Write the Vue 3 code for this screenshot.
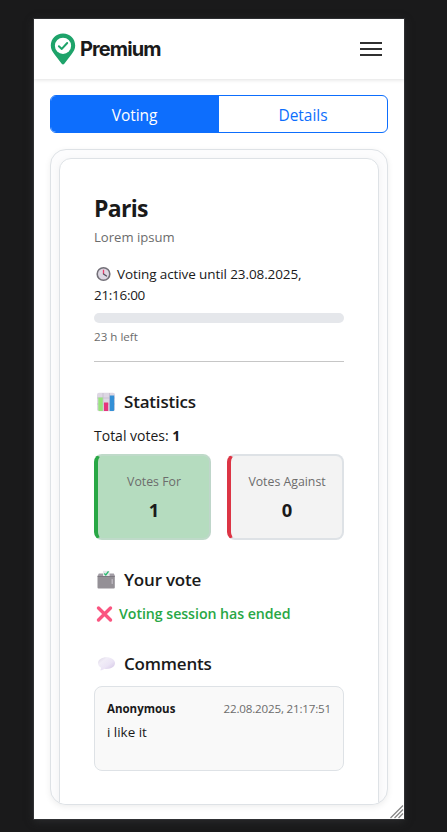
<script setup>
const stats = [
  { label: 'Votes For', value: 1, kind: 'for' },
  { label: 'Votes Against', value: 0, kind: 'against' },
]
const comment = { author: 'Anonymous', date: '22.08.2025, 21:17:51', text: 'i like it' }
</script>

<template>
  <div class="stage">
    <main class="window">
      <header class="header">
        <div class="brand">
          <svg class="pin" width="26" height="32" viewBox="0 0 26 32">
            <path d="M13 .5C6 .5.8 5.8.8 12.6c0 3.4 1.500 6.100 3.800 9l7.100 9.100c.8 1 1.800 1 2.600 0l7.100-9.100c2.300-2.900 3.800-5.600 3.800-9C25.200 5.800 20 .5 13 .5z" fill="#1ea36a" />
            <circle cx="13" cy="12.800" r="8.100" fill="#fff" />
            <path d="M8.900 13.200l2.900 2.700 5.400-5.900" fill="none" stroke="#1ea36a" stroke-width="2" stroke-linecap="round" stroke-linejoin="round" />
          </svg>
          <span class="brand-name">Premium</span>
        </div>
        <div class="burger"><i></i><i></i><i></i></div>
      </header>

      <nav class="tabs">
        <div class="tab active"><span>Voting</span></div>
        <div class="tab"><span>Details</span></div>
      </nav>

      <div class="outer">
        <article class="card">
          <h1 class="title"><span>Paris</span></h1>
          <p class="subtitle"><span>Lorem ipsum</span></p>

          <div class="until">
            <svg width="17" height="16" viewBox="0 0 17 16">
              <circle cx="9.500" cy="8" r="6.300" fill="#ddd8e3" stroke="#737078" stroke-width="1.600" />
              <path d="M9.500 8V3.700" stroke="#e8416d" stroke-width="1.300" />
              <path d="M9.500 8l3 2" stroke="#56515d" stroke-width="1.300" stroke-linecap="round" />
            </svg>
            <span>Voting active until 23.08.2025,</span>
          </div>
          <div class="until"><span class="time">21:16:00</span></div>
          <div class="bar"></div>
          <div class="left"><span>23 h left</span></div>
          <hr />

          <h2>
            <svg width="24" height="20" viewBox="0 0 24 20">
              <rect x="3" y=".8" width="18" height="18.400" rx="2" fill="#ddd7e3" />
              <path d="M9 1v18M15.500 1v18M3 6h18M3 12h18" stroke="#c0b8c8" stroke-width=".7" />
              <path d="M4.300 5.500h4.500V19H5.300a1 1 0 0 1-1-1z" fill="#98e47e" />
              <path d="M10 10.500h4.200V19H10z" fill="#e5357c" />
              <path d="M15.800 3.500h4.400V18a1 1 0 0 1-1 1h-3.400z" fill="#3490d6" />
            </svg>
            <span>Statistics</span>
          </h2>
          <p class="total"><span>Total votes: <b>1</b></span></p>
          <div class="stats">
            <div v-for="s in stats" :key="s.kind" class="stat" :class="s.kind">
              <div class="stat-label"><span>{{ s.label }}</span></div>
              <div class="stat-value">{{ s.value }}</div>
            </div>
          </div>

          <h2>
            <svg width="24" height="20" viewBox="0 0 24 20">
              <path d="M3.500 6l1.300-2.500h15L21 6z" fill="#a29da5" />
              <path d="M9 .8h6.600V6H9z" fill="#e4e8e9" />
              <path d="M10.300 3.500l1.500 1.500L14.500 1.300" fill="none" stroke="#27b96e" stroke-width="1.300" />
              <rect x="3.500" y="6" width="17.300" height="12.500" rx="1" fill="#949096" />
              <path d="M3.500 6.500h17.300" stroke="#7d7880" stroke-width="1" />
              <rect x="17.500" y="9" width="1.500" height="5" rx=".5" fill="#b9b4bc" />
            </svg>
            <span>Your vote</span>
          </h2>
          <p class="ended">
            <svg width="19" height="18" viewBox="0 0 19 18">
              <path d="M4.500 3l12 12M16.500 3l-12 12" stroke="#fa5580" stroke-width="3.400" stroke-linecap="round" />
            </svg>
            <span>Voting session has ended</span>
          </p>

          <h2 class="comments-heading">
            <svg width="24" height="20" viewBox="0 0 24 20">
              <defs>
                <linearGradient id="bubble" x1="0" y1="0" x2="1" y2="1">
                  <stop offset="0" stop-color="#d9d2e4" />
                  <stop offset=".3" stop-color="#f1edf7" />
                  <stop offset=".6" stop-color="#ebe4f5" />
                  <stop offset="1" stop-color="#cfc0e2" />
                </linearGradient>
              </defs>
              <path d="M12.500 3.200c-4.800 0-8.500 2.400-8.500 5.900 0 2 1.200 3.600 3 4.600.2 1-.5 1.800-.8 2.500 1.600.1 3-.5 3.900-1.500.8.200 1.600.3 2.400.3 4.800 0 8.500-2.400 8.500-5.900s-3.700-5.900-8.500-5.900z" fill="url(#bubble)" />
            </svg>
            <span>Comments</span>
          </h2>
          <section class="comment">
            <div class="comment-head">
              <b>{{ comment.author }}</b>
              <span>{{ comment.date }}</span>
            </div>
            <p><span>{{ comment.text }}</span></p>
          </section>
        </article>
      </div>

      <svg class="grip" width="14" height="14" viewBox="0 0 14 14">
        <path d="M.5 13l12.500-12.500M4.500 13l8.500-8.500M8.500 13l4.500-4.500" stroke="#888" stroke-width="1.300" />
      </svg>
    </main>
  </div>
</template>

<style>
body {
  background: #1a1a1b;
}
</style>

<style scoped>
.stage {
  box-sizing: border-box;
  width: 447px;
  height: 832px;
  padding: 19px 43px 13px 34px;
  background: #1a1a1b;
  overflow: hidden;
  font-family: "Open Sans", "Noto Sans", sans-serif;
  color: #1a1a1a;
}
.window {
  position: relative;
  width: 370px;
  height: 800px;
  background: #fff;
  box-shadow: 0 0 0 1px #303134, 0 2px 8px #2c2d2f;
}
span, b { white-space: nowrap; }
svg { flex: none; }
h1, h2, p { margin: 0; }
.header {
  box-sizing: border-box;
  height: 60px;
  padding: 0 22px 0 16px;
  display: flex;
  align-items: center;
  justify-content: space-between;
  box-shadow: 0 1px 4px rgba(0, 0, 0, .12);
}
.brand { display: flex; align-items: center; gap: 4px; }
.brand-name {
  font: 700 20px/30px Inter, sans-serif;
  letter-spacing: -.9px;
}
.burger { width: 22px; display: grid; gap: 4px; }
.burger i { height: 2px; background: #303030; }
.tabs {
  box-sizing: border-box;
  margin: 16px 16px 0;
  height: 38px;
  display: grid;
  grid-template-columns: 1fr 1fr;
  border: 1px solid #0d6efd;
  border-radius: 6px;
  overflow: hidden;
}
.tab {
  box-sizing: border-box;
  display: flex;
  justify-content: center;
  font-size: 15.500px;
  line-height: 38px;
  letter-spacing: -.05px;
  color: #0d6efd;
}
.tab.active { padding-right: 1px; background: #0d6efd; color: #fff; }
.outer {
  box-sizing: border-box;
  margin: 16px 16px 0;
  height: 656px;
  padding: 8px 8px 0;
  border: 1px solid #dee2e6;
  border-radius: 16px;
  background: #fcfcfd;
  box-shadow: 0 2px 6px rgba(0, 0, 0, .07);
  overflow: hidden;
}
.card {
  box-sizing: border-box;
  height: 680px;
  padding: 34px 34px 0;
  border: 1px solid #dee2e6;
  border-radius: 12px;
  background: #fff;
  box-shadow: 0 2px 8px rgba(0, 0, 0, .05);
}
.title { font-size: 23px; line-height: 30px; font-weight: 700; letter-spacing: -.7px; }
.subtitle { margin-top: 3px; font-size: 13.100px; line-height: 22px; color: #6c6c6c; }
.until { height: 21px; display: flex; align-items: center; gap: 6px; font-size: 13.500px; letter-spacing: -.1px; }
.subtitle + .until { margin-top: 15px; }
.time { letter-spacing: -.3px; }
.bar { margin-top: 8px; height: 10px; border-radius: 5px; background: #e5e7eb; }
.left { margin-top: 5px; font-size: 11.600px; line-height: 18px; color: #6c6c6c; }
hr { margin: 15px 0 0; border: 0; height: 1px; background: #c6c6c6; }
h2 { height: 22px; margin-top: 29px; display: flex; align-items: center; gap: 6px; font-size: 17px; font-weight: 600; letter-spacing: -.2px; }
h2 span { line-height: 22px; margin-top: -1px; }
.total { margin-top: 12px; font-size: 14px; line-height: 22px; }
.stats { margin-top: 7px; display: grid; grid-template-columns: 1fr 1fr; gap: 16px; }
.stat {
  box-sizing: border-box;
  height: 86px;
  padding: 16px 0 0 1px;
  border: 2px solid #dee2e6;
  border-left-width: 4px;
  border-radius: 8px;
  text-align: center;
}
.for { background: #b5dcbf; border-color: #bfdac9 #bfd6ca #bfdac9 #28a745; }
.against { background: #f3f3f3; border-left-color: #dc3545; }
.stat-label { font-size: 12.300px; line-height: 20px; color: #6c6c6c; }
.stat-value { margin-top: 5px; font-size: 18.400px; line-height: 26px; font-weight: 700; }
.ended { margin-top: 12px; height: 22px; display: flex; align-items: center; gap: 6px; font-size: 14.200px; font-weight: 600; color: #28a745; letter-spacing: -.05px; }
.ended span { line-height: 20px; margin-top: -1px; }
.comments-heading { margin-top: 28px; }
.comment {
  box-sizing: border-box;
  margin-top: 11px;
  height: 85px;
  padding: 12px;
  border: 1px solid #dee2e6;
  border-radius: 8px;
  background: #f9f9f9;
}
.comment-head { display: flex; justify-content: space-between; font-size: 11.600px; line-height: 20px; letter-spacing: -.18px; }
.comment-head b { font-size: 11.500px; letter-spacing: 0; }
.comment-head span { color: #6c6c6c; }
.comment p { margin-top: 2px; font-size: 13.400px; line-height: 22px; }
.grip { position: absolute; right: 0; bottom: 0; }
</style>
